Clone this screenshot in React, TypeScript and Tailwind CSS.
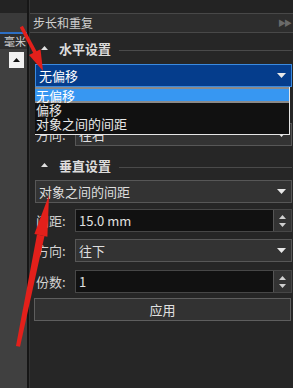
import React from 'react';

function Caret() {
  return (
    <svg width="9" height="5" viewBox="0 0 9 5" className="shrink-0">
      <path d="M0 0H9L4.5 5Z" fill="#e8e8e8" />
    </svg>
  );
}

function UpTri({ color = '#d0d0d0' }: { color?: string }) {
  return (
    <svg width="7" height="4" viewBox="0 0 7 4">
      <path d="M0 4H7L3.5 0Z" fill={color} />
    </svg>
  );
}

function DownTri() {
  return (
    <svg width="7" height="4" viewBox="0 0 7 4">
      <path d="M0 0H7L3.5 4Z" fill="#d0d0d0" />
    </svg>
  );
}

function SectionTitle({ title }: { title: string }) {
  return (
    <div className="flex items-center h-[16px]">
      <div className="w-[16px] flex justify-end pr-[3px]">
        <UpTri color="#e0e0e0" />
      </div>
      <span className="ml-[8px] text-[13px] font-bold text-[#dcdcdc] leading-none">{title}</span>
      <div className="flex-1 h-px bg-[#4a4a4a] ml-[8px] mt-[4px]" />
    </div>
  );
}

function Select({ value }: { value: string }) {
  return (
    <div className="h-[23px] flex items-center justify-between border border-[#575757] bg-[#333333] pl-[3px] pr-[5px]">
      <span className="text-[13px] text-[#dedede] leading-none">{value}</span>
      <Caret />
    </div>
  );
}

function SpinInput({ value }: { value: string }) {
  return (
    <div className="h-[23px] flex border border-[#474747] bg-[#111111]">
      <div className="flex-1 flex items-center pl-[3px] text-[13px] text-[#e0e0e0] leading-none">{value}</div>
      <div className="w-[18px] border-l border-[#555] bg-[#333] flex flex-col items-center justify-center gap-[4px]">
        <UpTri />
        <DownTri />
      </div>
    </div>
  );
}

function Row({ label, children }: { label: string; children: React.ReactNode }) {
  return (
    <div className="flex items-center">
      <span className="w-[40px] pl-[1px] text-[13px] text-[#d4d4d4] leading-none">{label}</span>
      <div className="flex-1">{children}</div>
    </div>
  );
}

export default function App() {
  return (
    <div className="relative w-[293px] h-[388px] overflow-hidden bg-[#262626] flex font-['Noto_Sans_CJK_SC','Liberation_Sans',sans-serif]">
      {/* left dock */}
      <div className="w-[27px] flex flex-col bg-[#404040]">
        <div className="h-[13px] bg-[#232323]" />
        <div className="h-[19px] bg-[#3a3a3a]" />
        <div className="h-[17px] border-t-2 border-[#2d6fc4] bg-[#2e2e2e] flex items-center justify-end pr-[1px]">
          <span className="text-[11px] text-[#cfcfcf] leading-none">毫米</span>
        </div>
        <div className="flex justify-end pr-[3px] pt-[3px]">
          <div className="w-[15px] h-[16px] bg-[#f2f2f2] flex items-center justify-center">
            <svg width="7" height="4" viewBox="0 0 7 4">
              <path d="M0 4H7L3.5 0Z" fill="#111" />
            </svg>
          </div>
        </div>
      </div>
      <div className="w-[2px] bg-[#161616]" />
      <div className="w-px bg-[#333]" />

      {/* main panel */}
      <div className="flex-1 flex flex-col">
        <div className="h-[13px] bg-[#232323]" />
        <div className="h-[20px] border-y border-[#484848] bg-[#2d2d2d] flex items-center justify-between pl-[3px] pr-[3px]">
          <span className="text-[12px] text-[#cfcfcf] leading-none">步长和重复</span>
          <span className="text-[8px] text-[#6a6a6a] leading-none tracking-[-2px]">▶▶</span>
        </div>

        <div className="flex flex-col pl-[5px] pr-[1px]">
          <div className="mt-[7px]">
            <SectionTitle title="水平设置" />
          </div>

          <div className="relative mt-[8px]">
            <div className="h-[23px] flex items-center justify-between border border-[#3a8ae0] bg-[#053d8c] pl-[3px] pr-[5px]">
              <span className="text-[13px] text-white leading-none">无偏移</span>
              <Caret />
            </div>
            {/* open list */}
            <div className="absolute left-0 right-[2px] top-[23px] h-[48px] bg-[#111111] border-r border-b border-[#e6e6e6] z-10 flex flex-col">
              <div className="h-[16px] border-y-2 border-[#8a8a8a] bg-[#3797f2] flex items-center pl-[1px]">
                <span className="text-[13px] text-white leading-none">无偏移</span>
              </div>
              <div className="h-[13px] flex items-center pl-[1px]">
                <span className="text-[13px] text-[#e8e8e8] leading-none">偏移</span>
              </div>
              <div className="h-[14px] flex items-center pl-[1px]">
                <span className="text-[13px] text-[#e8e8e8] leading-none">对象之间的间距</span>
              </div>
            </div>
          </div>

          {/* row hidden under the open list */}
          <div className="mt-[6px] h-[23px]" />
          <div className="mt-[7px]">
            <Row label="方向:">
              <Select value="往右" />
            </Row>
          </div>

          <div className="mt-[11px]">
            <SectionTitle title="垂直设置" />
          </div>

          <div className="mt-[7px]">
            <Select value="对象之间的间距" />
          </div>
          <div className="mt-[6px]">
            <Row label="间距:">
              <SpinInput value="15.0 mm" />
            </Row>
          </div>
          <div className="mt-[7px]">
            <Row label="方向:">
              <Select value="往下" />
            </Row>
          </div>
          <div className="mt-[8px]">
            <Row label="份数:">
              <SpinInput value="1" />
            </Row>
          </div>
          <button className="mt-[5px] h-[23px] w-full border border-[#5e5e5e] bg-[#323232] text-[13px] text-[#e0e0e0] leading-none ml-[-1px]">
            应用
          </button>
        </div>
      </div>

      {/* red annotation arrows */}
      <svg className="absolute inset-0 pointer-events-none z-20" width="293" height="388" viewBox="0 0 293 388">
        <path d="M19.8 27.4 L22.8 25.8 L37.5 53 L34 54.6 Z" fill="#e3201b" />
        <polygon points="29,55 40.5,49.2 43,71" fill="#e3201b" />
        <path d="M16 346 L20 346.8 L44.5 236 L37 234.5 Z" fill="#e3201b" />
        <polygon points="34.4,234 47.4,236.7 49,195" fill="#e3201b" />
      </svg>
    </div>
  );
}
